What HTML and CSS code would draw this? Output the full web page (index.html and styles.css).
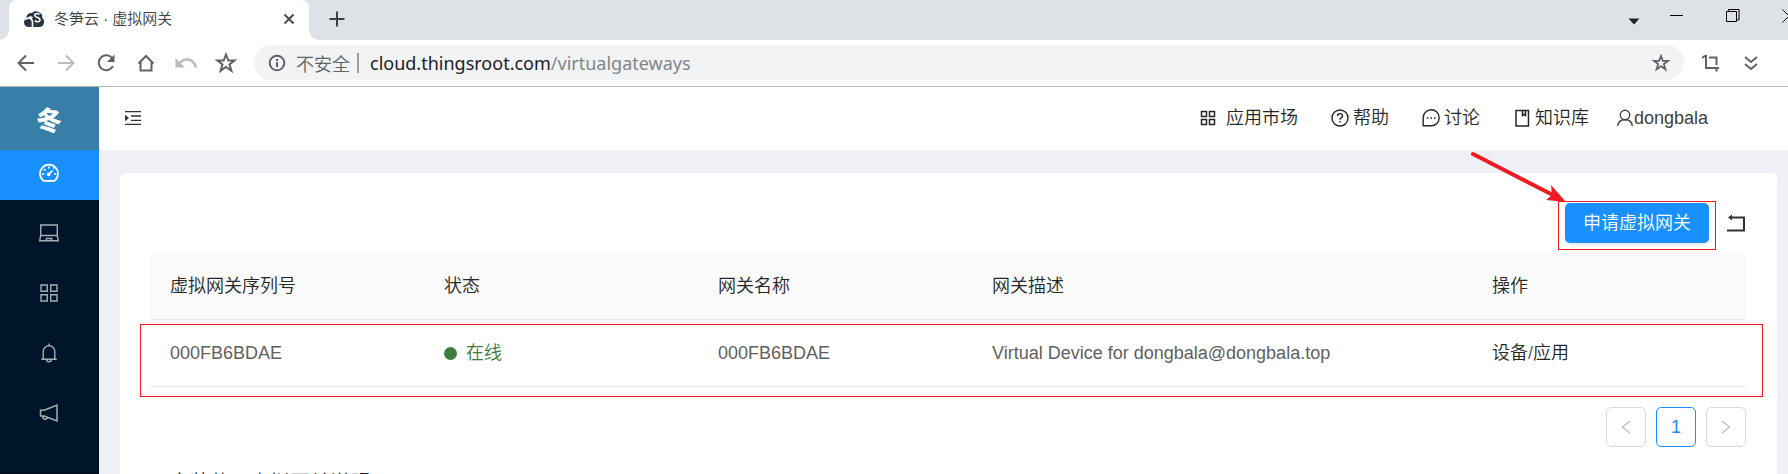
FILE: index.html
```html
<!DOCTYPE html>
<html lang="zh-CN">
<head>
<meta charset="utf-8">
<title>冬笋云 · 虚拟网关</title>
<link rel="stylesheet" href="styles.css">
</head>
<body>
<div class="browser">
  <div class="tabstrip">
    <div class="tab">
      <svg class="favicon" width="20" height="17" viewBox="0 0 20 17">
        <path fill="#2b3541" d="M5 16C2 16 0 14 0 11.500C0 9 1.500 8 2.500 7.500C2 4 5 1.500 8 2C10 -.5 14 -.3 16 2C18.500 3 18.500 5.500 18 6.500C20 8 20 10 20 11C20 14 18 16 15 16Z"/>
        <path fill="none" stroke="#fff" stroke-width="1.600" d="M15.500 3.500C13 1.500 10 3 11 5C12 7 16 6 16 9C15.800 11.500 12 11 11 9.500M1.500 8.500C4 6 8 7 8.500 11V16M8.500 7C7 5.500 5 6 4.500 7"/>
      </svg>
      <span class="tab-title">冬笋云 · 虚拟网关</span>
      <button class="plain" aria-label="关闭标签页"><svg width="12" height="12" viewBox="0 0 12 12" fill="none" stroke="#4a4d51" stroke-width="2"><path d="M1.500 1.500l9 9M10.500 1.500l-9 9"/></svg></button>
    </div>
    <button class="plain new-tab" aria-label="新标签页"><svg width="16" height="16" viewBox="0 0 16 16" fill="none" stroke="#3c4043" stroke-width="2"><path d="M8 .5v15M.5 8h15"/></svg></button>
    <div class="window-controls">
      <button class="plain drop" aria-label="更多"><svg width="12" height="7" viewBox="0 0 12 7"><path fill="#202124" d="M.5.500h11L6 6.500z"/></svg></button>
      <button class="plain" aria-label="最小化"><svg width="14" height="14" viewBox="0 0 14 14"><path stroke="#000" d="M0 6.500h13"/></svg></button>
      <button class="plain" aria-label="还原"><svg width="14" height="14" viewBox="0 0 14 14" fill="none" stroke="#000"><path d="M.5 2.500h10v10H.5zM2.500 2.500v-2h10.500v10.500h-2.500"/></svg></button>
      <button class="plain" aria-label="关闭"><svg width="14" height="14" viewBox="0 0 14 14" fill="none" stroke="#000"><path d="M.5.500l13 13M13.500.500l-13 13"/></svg></button>
    </div>
  </div>
  <div class="toolbar">
    <div class="nav-buttons">
      <button class="plain" aria-label="后退"><svg width="20" height="20" viewBox="0 0 20 20" fill="none" stroke="#5f6368" stroke-width="2"><path d="M18 10H3M10 2.500L2.500 10l7.500 7.500"/></svg></button>
      <button class="plain" aria-label="前进"><svg width="20" height="20" viewBox="0 0 20 20" fill="none" stroke="#babcbe" stroke-width="2"><path d="M2 10h15M10 2.500l7.500 7.500-7.500 7.500"/></svg></button>
      <button class="plain" aria-label="刷新"><svg width="20" height="20" viewBox="0 0 20 20" fill="none" stroke="#5f6368" stroke-width="2"><path d="M16.500 5.500A7.500 7.500 0 1 0 17 13"/><path fill="#5f6368" stroke="none" d="M18.500 1.500v7.500h-7.500z"/></svg></button>
      <button class="plain" aria-label="主页"><svg width="20" height="20" viewBox="0 0 20 20" fill="none" stroke="#5f6368" stroke-width="2"><path d="M2.500 10.500L10 3l7.500 7.500M4.500 9v8.500h11V9"/></svg></button>
      <button class="plain" aria-label="撤销"><svg width="20" height="20" viewBox="1 0 20 20" overflow="visible" fill="none" stroke="#babcbe" stroke-width="2.500"><path d="M4 11C9 4 18 5 21 14.500"/><path fill="#babcbe" stroke="none" d="M.5 5v9.500H10z"/></svg></button>
      <button class="plain" aria-label="收藏夹"><svg width="20" height="20" viewBox="1 1 20 20" overflow="visible" fill="none" stroke="#5f6368" stroke-width="2"><path d="M11 2.500l2.300 6h6.200l-5 3.900 1.900 6.300L11 15l-5.400 3.700 1.900-6.300-5-3.900h6.200z"/></svg></button>
    </div>
    <div class="omnibox">
      <svg width="18" height="18" viewBox="0 0 18 18" fill="none" stroke="#5f6368" stroke-width="2"><circle cx="9" cy="9" r="7.300"/><path d="M9 8v5M9 5v2"/></svg>
      <span class="insecure">不安全</span>
      <span class="url"><span class="host">cloud.thingsroot.com</span>/virtualgateways</span>
      <button class="plain bookmark" aria-label="收藏"><svg width="18" height="18" viewBox="0 0 22 22" fill="none" stroke="#5f6368" stroke-width="2.200"><path d="M11 2.500l2.300 6h6.200l-5 3.900 1.900 6.300L11 15l-5.400 3.700 1.900-6.300-5-3.900h6.200z"/></svg></button>
    </div>
    <button class="plain" aria-label="截图"><svg width="18" height="18" viewBox="0 0 18 18" fill="none" stroke="#5f6368" stroke-width="2"><path d="M4 1v13h13M0 4l3.500-2.500M7 3.500h7.500V11M14.500 14v3.500"/></svg></button>
    <button class="plain" aria-label="扩展"><svg width="14" height="16" viewBox="0 0 14 16" fill="none" stroke="#5f6368" stroke-width="2"><path d="M1 2l6 5 6-5M1 9l6 5 6-5"/></svg></button>
  </div>
</div>

<div class="app">
  <aside class="sidebar">
    <div class="logo"><span class="logo-char">冬</span></div>
    <nav class="side-menu">
      <a href="#" class="side-item active" aria-label="仪表盘"><svg width="20" height="20" viewBox="0 0 20 20" fill="none" stroke="currentColor" stroke-width="1.700"><path d="M4.500 17.800A9 9 0 1 1 15.500 17.800ZM9.500 11.500L13.500 7.500"/><circle cx="9.700" cy="11.300" r="1" fill="currentColor"/><path d="M10 3.500v2M3 11h2.200M15 11h2.200M5 6l1.500 1.500M14 5.500l1-.8"/></svg></a>
      <a href="#" class="side-item" aria-label="设备"><svg width="20" height="20" viewBox="0 0 20 20" fill="none" stroke="currentColor" stroke-width="1.400"><path d="M1.700 12.500V2h16.600v10.500M1.700 12.500h16.600l1 5.300H.7zM7 17.800l.5-2.300h5l.5 2.300"/></svg></a>
      <a href="#" class="side-item" aria-label="应用"><svg width="20" height="20" viewBox="0 0 20 20" fill="none" stroke="currentColor" stroke-width="1.400"><path d="M2 2h6.300v6.300H2zM11.700 2H18v6.300h-6.300zM2 11.700h6.300V18H2zM11.700 11.700H18V18h-6.300z"/></svg></a>
      <a href="#" class="side-item" aria-label="消息"><svg width="20" height="20" viewBox="0 0 20 20" fill="none" stroke="currentColor" stroke-width="1.400"><path d="M4.200 16V8.500a5.800 5.800 0 0 1 11.600 0V16M2.300 16.300h15.400M10 .5v2M7.700 16.500a2.300 2.300 0 0 0 4.600 0"/></svg></a>
      <a href="#" class="side-item" aria-label="公告"><svg width="20" height="20" viewBox="0 0 20 20" fill="none" stroke="currentColor" stroke-width="1.500"><path d="M1.500 7.200h3.700L18 2v16L5.200 13H1.500zM4 13.500a2.300 2.300 0 0 0 4.500 1"/></svg></a>
    </nav>
  </aside>

  <div class="main">
    <header class="header">
      <button class="plain" aria-label="展开菜单"><svg width="16" height="14" viewBox="0 0 16 14" fill="none" stroke="#333" stroke-width="1.300"><path d="M0 .7h16M6 5h10M6 9.300h10M0 13.300h16"/><path fill="#333" stroke="none" d="M0 3.800v6.400L4 7z"/></svg></button>
      <nav class="top-menu">
        <a href="#" class="top-item market"><svg width="16" height="16" viewBox="0 0 16 16" fill="none" stroke="currentColor" stroke-width="1.500"><path d="M1.500 1.500h5v5h-5zM9.500 1.500h5v5h-5zM1.500 9.500h5v5h-5zM9.500 9.500h5v5h-5z"/></svg>应用市场</a>
        <a href="#" class="top-item"><svg width="18" height="18" viewBox="0 0 18 18" fill="none" stroke="currentColor" stroke-width="1.400"><circle cx="9" cy="9" r="8"/><path d="M6.500 7C6.500 3.800 11.500 3.800 11.500 7 11.500 8.800 9 8.500 9 10.800M9 12v1.500"/></svg>帮助</a>
        <a href="#" class="top-item"><svg width="18" height="18" viewBox="0 0 18 18" fill="none" stroke="currentColor" stroke-width="1.400"><path d="M1.200 16.800V9A8 8 0 1 1 9.200 16.800Z"/><path d="M4.800 9h1.600M8.400 9h1.600M12 9h1.600" stroke-width="1.600"/></svg>讨论</a>
        <a href="#" class="top-item"><svg width="18" height="18" viewBox="0 0 18 18" fill="none" stroke="currentColor" stroke-width="1.500"><path d="M3 1.500h12.500v15.500H3zM9.500 1.500v5l1.500-1 1.500 1v-5"/></svg>知识库</a>
        <a href="#" class="top-item user"><svg width="18" height="18" viewBox="0 0 18 18" fill="none" stroke="currentColor" stroke-width="1.400"><circle cx="9" cy="6" r="4.700"/><path d="M1.700 17C2 13 5 10.700 9 10.700S16 13 16.300 17"/></svg>dongbala</a>
      </nav>
    </header>

    <main class="content">
      <section class="card">
        <div class="actions">
          <div class="callout">
            <button class="primary">申请虚拟网关</button>
            <svg class="arrow" width="98" height="56" viewBox="0 0 98 56" fill="#ed1c24"><path stroke="#ed1c24" stroke-width="4" stroke-linecap="round" d="M4 4L82 44"/><path d="M97 52L77 50l6-5-1-10z"/></svg>
          </div>
          <button class="plain" aria-label="返回"><svg width="19" height="18" viewBox="0 0 19 18" fill="none" stroke="#333" stroke-width="2"><path d="M4 3.500h13v13H0"/><path fill="#333" stroke="none" d="M1 3.500L5 .5v6z"/></svg></button>
        </div>
        <div class="table-wrap">
          <table class="gateways">
            <colgroup><col class="col"><col class="col"><col class="col"><col><col class="col"></colgroup>
            <thead><tr><th>虚拟网关序列号</th><th>状态</th><th>网关名称</th><th>网关描述</th><th>操作</th></tr></thead>
            <tbody><tr>
              <td>000FB6BDAE</td>
              <td><span class="status">在线</span></td>
              <td>000FB6BDAE</td>
              <td>Virtual Device for dongbala@dongbala.top</td>
              <td><a href="#">设备</a>/<a href="#">应用</a></td>
            </tr></tbody>
          </table>
        </div>
        <nav class="pagination" aria-label="分页">
          <button class="page" aria-label="上一页" disabled><svg width="10" height="14" viewBox="0 0 10 14" fill="none" stroke="currentColor" stroke-width="1.400"><path d="M9 1L1.500 7 9 13"/></svg></button>
          <button class="page current">1</button>
          <button class="page" aria-label="下一页" disabled><svg width="10" height="14" viewBox="0 0 10 14" fill="none" stroke="currentColor" stroke-width="1.400"><path d="M1 1l7.500 6L1 13"/></svg></button>
        </nav>
        <h2 class="note">安装使用虚拟网关说明</h2>
      </section>
    </main>
  </div>
</div>
</body>
</html>
```
FILE: styles.css
```css
* { box-sizing: border-box; }
body {
  margin: 0;
  height: 100vh;
  overflow: hidden;
  display: flex;
  flex-direction: column;
  font: 350 18px/28px "Liberation Sans", "Noto Sans CJK SC", sans-serif;
  color: #262626;
  background: #eff0f5;
}
a { color: inherit; text-decoration: none; }
svg { display: block; flex: none; }
button { font: inherit; cursor: pointer; }
.plain { border: 0; padding: 0; background: none; flex: none; }

/* Browser chrome */
.tabstrip {
  display: flex;
  align-items: center;
  height: 40px;
  padding-left: 9px;
  background: #dee1e6;
  overflow: hidden;
}
.tab {
  position: relative;
  display: flex;
  align-items: center;
  gap: 10px;
  width: 300px;
  height: 40px;
  padding: 0 14px 2px 15px;
  background: #fff;
  border-radius: 8px 8px 0 0;
}
.tab::before, .tab::after {
  content: "";
  position: absolute;
  bottom: 0;
  width: 9px;
  height: 9px;
}
.tab::before { right: 100%; background: radial-gradient(circle at 0 0, #dee1e6 8px, #fff 9px); }
.tab::after { left: 100%; background: radial-gradient(circle at 100% 0, #dee1e6 8px, #fff 9px); }
.tab-title {
  flex: 1;
  font: 350 15px/20px "Liberation Sans", "Noto Sans CJK SC", sans-serif;
  color: #3c4043;
}
.new-tab { margin-left: 20px; padding-bottom: 2px; }
.window-controls {
  display: flex;
  align-items: center;
  gap: 42px;
  margin-left: auto;
  margin-right: -8px;
  padding-bottom: 8px;
}
.drop { margin: 10px -12px 0 0; }
.toolbar {
  display: flex;
  align-items: center;
  gap: 24px;
  height: 47px;
  padding: 0 30px 1px 16px;
  background: #fff;
  border-bottom: 1px solid #b5b6b8;
}
.nav-buttons { display: flex; align-items: center; gap: 20px; margin-right: -6px; }
.omnibox {
  flex: 1;
  display: flex;
  align-items: center;
  height: 35px;
  margin-right: -6px;
  padding: 0 14px;
  border-radius: 18px;
  background: #f1f3f4;
  font: 18px/20px "Noto Sans", "Noto Sans CJK SC", sans-serif;
  color: #80868b;
}
.insecure {
  margin-left: 10px;
  padding-right: 7px;
  border-right: 2px solid #9a9da1;
  font: 350 18px/20px "Noto Sans CJK SC", sans-serif;
  color: #5f6368;
}
.url { flex: 1; margin-left: 11px; }
.host { color: #202124; }

/* Application */
.app { flex: 1; display: flex; min-height: 0; }
.sidebar {
  display: flex;
  flex-direction: column;
  width: 99px;
  background: #001529;
  border-bottom: 1px solid #000c17;
}
.logo {
  display: flex;
  align-items: center;
  justify-content: center;
  height: 63px;
  padding-right: 1px;
  background: #377fa9;
  color: #fff;
}
.logo-char { font: 900 26px/28px "Noto Sans CJK SC", sans-serif; transform: rotate(6deg); }
.side-menu { display: flex; flex-direction: column; gap: 10px; }
.side-item {
  display: flex;
  align-items: center;
  justify-content: center;
  height: 50px;
  padding: 0 1px 4px 0;
  color: #a6adb4;
}
.side-item.active { background: #1890ff; color: #fff; }
.main { flex: 1; min-width: 0; display: flex; flex-direction: column; }
.header {
  flex: none;
  display: flex;
  align-items: center;
  justify-content: space-between;
  height: 63px;
  padding: 0 80px 2px 26px;
  background: #fff;
}
.top-menu { display: flex; gap: 33px; }
.top-item { display: flex; align-items: center; gap: 4px; }
.market { gap: 10px; }
.user { gap: 0; margin-left: -6px; color: #404040; }
.content { flex: 1; min-height: 0; padding: 23px 11px 0 21px; }
.card {
  height: 100%;
  padding: 30px 31px 0 30px;
  border-radius: 5px 5px 0 0;
  background: #fff;
}
.actions { display: flex; align-items: center; justify-content: flex-end; gap: 18px; }
.callout { position: relative; }
.callout::after {
  content: "";
  position: absolute;
  inset: -2px -7px -7px -7px;
  border: 1px solid #ed1c24;
  pointer-events: none;
}
.arrow { position: absolute; right: 142px; bottom: 37px; }
.primary {
  display: block;
  height: 40px;
  padding: 0 18px;
  border: 0;
  border-radius: 5px;
  background: #1890ff;
  color: #fff;
  box-shadow: 0 2px 3px rgba(0, 0, 0, 0.1);
}
.table-wrap { position: relative; margin-top: 10px; }
.table-wrap::after {
  content: "";
  position: absolute;
  inset: 71px -17px -10px -10px;
  border: 1px solid #ed1c24;
  pointer-events: none;
}
.gateways { width: 100%; table-layout: fixed; border-collapse: separate; border-spacing: 0; }
.col { width: 274px; }
.gateways th, .gateways td {
  height: 67px;
  padding: 0 20px;
  border-bottom: 1px solid #e8e8e8;
  text-align: left;
  font-weight: 350;
}
.gateways th { background: #fafafa; color: #262626; }
.gateways th:first-child { border-top-left-radius: 5px; }
.gateways th:last-child { border-top-right-radius: 5px; }
.gateways td { color: #5f5f5f; }
.gateways td a { color: #262626; }
.status { display: flex; align-items: center; gap: 9px; color: #3f7a3f; }
.status::before { content: ""; width: 13px; height: 13px; border-radius: 50%; background: #3f7a3f; }
.pagination { display: flex; justify-content: flex-end; gap: 10px; margin-top: 20px; }
.page {
  display: flex;
  align-items: center;
  justify-content: center;
  width: 40px;
  height: 40px;
  padding: 0;
  border: 1px solid #d9d9d9;
  border-radius: 5px;
  background: #fff;
  color: #bfbfbf;
}
.page.current { border-color: #1890ff; color: #1890ff; }
.note { margin: 22px 20px 0; font-size: 20px; line-height: 28px; font-weight: 350; }
```
